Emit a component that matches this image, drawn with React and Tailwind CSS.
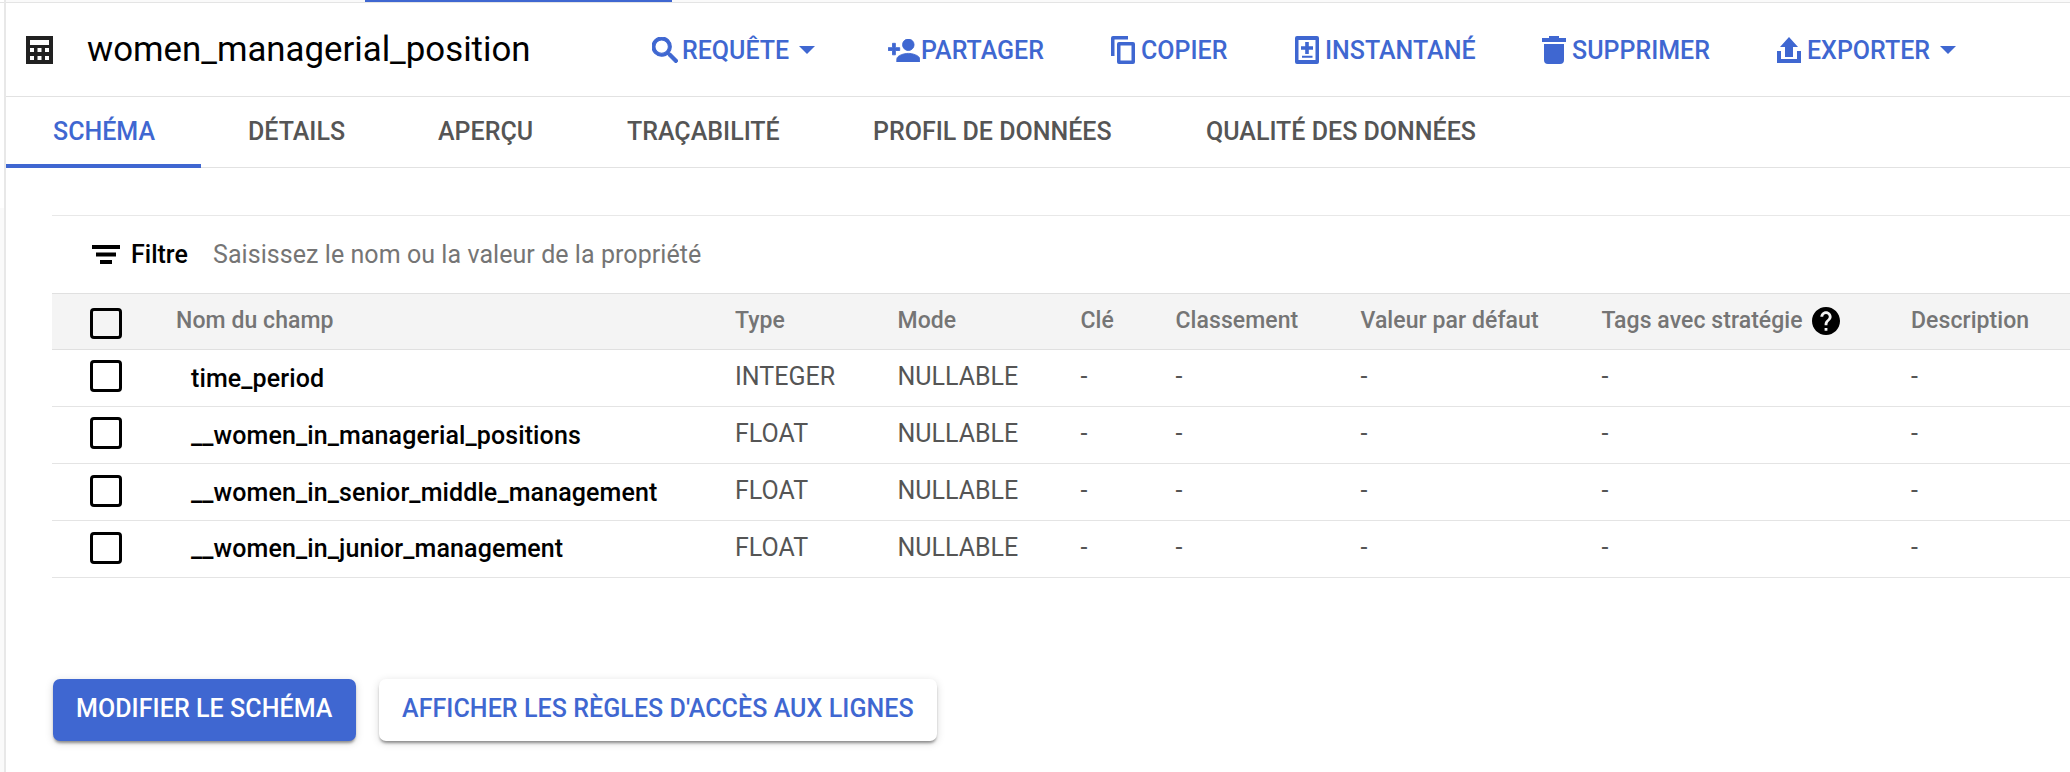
import React from 'react';

const Svg = ({ className, children, viewBox = '0 0 24 24' }) => (
  <svg viewBox={viewBox} className={className} fill="currentColor">{children}</svg>
);

const tools = [
  { label: 'REQUÊTE', x: 'ml-[122px] w-[236px]', gap: 'w-[31px]', text: 'w-[107px]', caret: true,
    icon: <Svg viewBox="3 3 17.49 17.49" className="h-[26px] w-[26px]"><path d="M15.5 14h-.79l-.28-.27A6.471 6.471 0 0 0 16 9.5 6.5 6.5 0 1 0 9.5 16c1.61 0 3.09-.59 4.23-1.57l.27.28v.79l5 4.99L20.49 19l-4.99-5zm-6 0C7.01 14 5 11.99 5 9.5S7.01 5 9.5 5 14 7.01 14 9.5 11.99 14 9.5 14z" stroke="currentColor" strokeWidth=".7" /></Svg> },
  { label: 'PARTAGER', x: 'w-[223px]', gap: 'w-[34px]', text: 'w-[122px]',
    icon: <Svg viewBox="1 4 22 16" className="relative top-[1px] h-[23px] w-[32px]"><path d="M15 12c2.21 0 4-1.79 4-4s-1.79-4-4-4-4 1.79-4 4 1.79 4 4 4zm-9-2V7H4v3H1v2h3v3h2v-3h3v-2H6zm9 4c-2.67 0-8 1.34-8 4v2h16v-2c0-2.66-5.33-4-8-4z" stroke="currentColor" strokeWidth=".6" /></Svg> },
  { label: 'COPIER', x: 'w-[184px]', gap: 'w-[31px]', text: 'w-[86px]',
    icon: <Svg viewBox="0 0 24 28" className="h-[28px] w-[24px]"><path fillRule="evenodd" d="M0 2Q0 0 2 0H17V3.500H3.500V20H0ZM8 6H22Q24 6 24 8V26Q24 28 22 28H8Q6 28 6 26V8Q6 6 8 6ZM9.500 9.500V24.500H20.500V9.500Z" /></Svg> },
  { label: 'INSTANTANÉ', x: 'w-[247px]', gap: 'w-[31px]', text: 'w-[149px]',
    icon: <Svg viewBox="0 0 24 28" className="h-[28px] w-[24px]"><path fillRule="evenodd" d="M2 0H22Q24 0 24 2V26Q24 28 22 28H2Q0 28 0 26V2Q0 0 2 0ZM3.500 4V24H20.500V4ZM10.200 6H13.800V10.200H18V13.800H13.800V18H10.200V13.800H6V10.200H10.200ZM7 19.700H17.500V21.700H7Z" /></Svg> },
  { label: 'SUPPRIMER', x: 'w-[235px]', gap: 'w-[31px]', text: 'w-[138px]',
    icon: <Svg viewBox="0 0 24 28" className="h-[28px] w-[24px]"><path d="M7 0H17V2H24V6H0V2H7ZM2 8H22V24Q22 28 18 28H6Q2 28 2 24Z" /></Svg> },
  { label: 'EXPORTER', x: 'w-[200px]', gap: 'w-[31px]', text: 'w-[123px]', caret: true,
    icon: <Svg viewBox="0 0 24 26" className="h-[26px] w-[24px]"><path d="M12 0L21 10H16V20H8V10H3ZM0 14H4V22H20V14H24V26H0Z" /></Svg> },
];

const tabs = [
  ['SCHÉMA', 'w-[101px]'], ['DÉTAILS', 'w-[96px]'], ['APERÇU', 'w-[95px]'],
  ['TRAÇABILITÉ', 'w-[152px]'], ['PROFIL DE DONNÉES', 'w-[239px]'], ['QUALITÉ DES DONNÉES', 'w-[271px]'],
];

const rows = [
  ['time_period', 'INTEGER'],
  ['__women_in_managerial_positions', 'FLOAT'],
  ['__women_in_senior_middle_management', 'FLOAT'],
  ['__women_in_junior_management', 'FLOAT'],
];

const grid = 'grid grid-cols-[124px_559px_162.500px_183px_95px_185px_241px_309.500px_1fr] whitespace-nowrap';

const Check = ({ className }) => (
  <span className={`ml-[38px] block w-[32px] rounded-[4px] border-[3px] border-black ${className}`} />
);

export default function App() {
  return (
    <div className="flex h-[772px] w-[2070px] overflow-hidden bg-white font-['Roboto',sans-serif] text-[25px] text-[#555]">
      <div className="flex w-[6px] shrink-0 flex-col border-r-2 border-[#e8e8e8]">
        <div className="h-[3px] border-b border-[#e4e4e4]" />
        <div className="mt-[205px] flex-1 bg-[#fafafa]" />
      </div>
      <div className="flex min-w-0 flex-1 flex-col">
        <div className="h-[3px] shrink-0 border-b border-[#e4e4e4] bg-[#fafafa]">
          <div className="ml-[359px] h-[2px] w-[307px] bg-[#3f67d1]" />
        </div>
        <header className="flex h-[94px] shrink-0 items-center border-b border-[#e2e2e2] whitespace-nowrap">
          <Svg viewBox="0 0 27 28" className="ml-[20px] h-[28px] w-[27px] shrink-0 text-[#212121]">
            <path fillRule="evenodd" d="M0 0H27V28H0ZM4 4V9H23V4ZM4 12V16H8V12ZM11.500 12V16H15.500V12ZM19 12V16H23V12ZM4 20V24H8V20ZM11.500 20V24H15.500V20ZM19 20V24H23V20Z" />
          </Svg>
          <h1 className="mb-[2px] ml-[34px] w-[443px] shrink-0 text-[34.800px] leading-[40px] text-black">women_managerial_position</h1>
          {tools.map((t) => (
            <button key={t.label} className={`flex shrink-0 items-center font-medium text-[#3f67d1] ${t.x}`}>
              <span className={`shrink-0 ${t.gap}`}>{t.icon}</span>
              <span className={`relative top-[1px] -ml-[1px] shrink-0 text-left ${t.text}`}>{t.label}</span>
              {t.caret && <Svg viewBox="0 0 16 8" className="ml-[10px] h-[8px] w-[16px]"><path d="M0 0H16L8 8Z" /></Svg>}
            </button>
          ))}
        </header>
        <nav className="flex h-[71px] shrink-0 border-b border-[#e2e2e2] font-medium whitespace-nowrap">
          {tabs.map(([label, w], i) => (
            <div key={label} className={`box-content flex shrink-0 flex-col justify-end ${i === 0 ? 'px-0 text-[#3f67d1]' : 'px-[47px]'}`}>
              <div className={`${i === 0 ? 'px-[47px]' : ''} leading-[30px]`}><div className={w}>{label}</div></div>
              <div className={`mt-[17px] ${i === 0 ? '-mb-[1px] h-[4px] bg-[#3f67d1]' : 'h-[3px]'}`} />
            </div>
          ))}
        </nav>
        <main className="pl-[46px]">
          <div className="mt-[47px] flex h-[78px] items-center border-t border-[#e8e8e8] pl-[40px]">
            <Svg viewBox="0 0 28 19" className="h-[19px] w-[28px] text-black"><path d="M0 0H28V4H0ZM4 7.500H24V11.500H4ZM8 15H20V19H8Z" /></Svg>
            <span className="ml-[11px] w-[82px] font-medium text-black">Filtre</span>
            <span className="tracking-[0.06px] text-[#757575]">Saisissez le nom ou la valeur de la propriété</span>
          </div>
          <div className={`${grid} h-[57px] border-y border-[#e0e0e0] bg-[#f4f4f4] text-[23px] leading-[28px] font-medium tracking-[0.07px] text-[#757575]`}>
            <Check className="mt-[14px] h-[31px]" />
            {['Nom du champ', 'Type', 'Mode', 'Clé', 'Classement', 'Valeur par défaut'].map((h) => <span key={h} className="pt-[13px]">{h}</span>)}
            <span className="flex items-start pt-[13px]">
              <span className="w-[210px]">Tags avec stratégie</span>
              <Svg viewBox="2 2 20 20" className="h-[28px] w-[28px] text-black"><path d="M12 2C6.480 2 2 6.480 2 12s4.480 10 10 10 10-4.480 10-10S17.520 2 12 2zm1 17h-2v-2h2v2zm2.070-7.750l-.9.920C13.450 12.900 13 13.500 13 15h-2v-.5c0-1.100.450-2.100 1.170-2.830l1.240-1.260c.370-.360.590-.860.590-1.410 0-1.100-.9-2-2-2s-2 .9-2 2H8c0-2.210 1.790-4 4-4s4 1.790 4 4c0 .880-.360 1.680-.930 2.250z" /></Svg>
            </span>
            <span className="pt-[13px]">Description</span>
          </div>
          {rows.map(([name, type], i) => (
            <div key={name} className={`${grid} h-[57px] border-b border-[#e4e4e4] leading-[30px]`}>
              <Check className={`h-[32px] ${i > 1 ? 'mt-[11px]' : 'mt-[10px]'}`} />
              <span className={`pl-[15px] font-medium tracking-[0.11px] text-black ${i === 3 ? 'pt-[13px]' : 'pt-[14px]'}`}>{name}</span>
              <span className="pt-[12px]">{type}</span>
              <span className="pt-[12px]">NULLABLE</span>
              {[0, 1, 2, 3, 4].map((k) => <span key={k} className="pt-[12px]">-</span>)}
            </div>
          ))}
          <div className="mt-[101px] ml-[1px] flex gap-[23px] font-medium tracking-[0.07px] whitespace-nowrap">
            <button className="flex h-[62px] w-[303px] justify-start rounded-[7px] bg-[#3f67d1] pt-[14px] pl-[23px] leading-[32px] text-white shadow-[0_3px_3px_-1px_rgba(0,0,0,0.4),0_2px_8px_rgba(0,0,0,0.15)]">MODIFIER LE SCHÉMA</button>
            <button className="flex h-[62px] w-[558px] justify-start rounded-[7px] bg-white pt-[14px] pl-[23px] leading-[32px] text-[#3f67d1] shadow-[0_3px_3px_-1px_rgba(0,0,0,0.4),0_2px_8px_rgba(0,0,0,0.15)]">AFFICHER LES RÈGLES D'ACCÈS AUX LIGNES</button>
          </div>
        </main>
      </div>
    </div>
  );
}
